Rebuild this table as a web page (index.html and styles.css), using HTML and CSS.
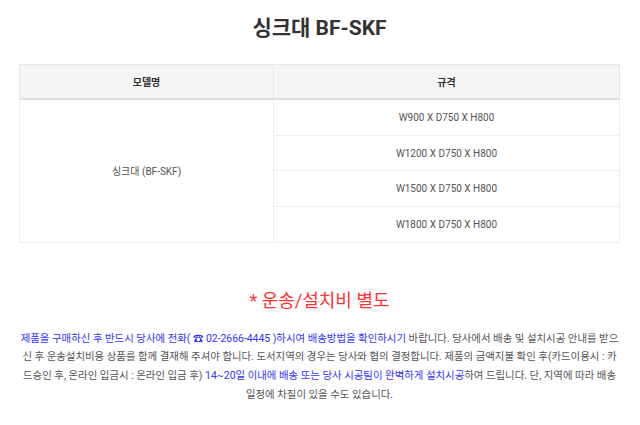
FILE: index.html
```html
<!DOCTYPE html>
<html lang="ko">
<head>
<meta charset="utf-8">
<link rel="stylesheet" href="styles.css">
</head>
<body>
<div class="page">
  <h1 class="title">싱크대 BF-SKF</h1>
  <table class="spec">
    <thead>
      <tr><th class="col-model">모델명</th><th>규격</th></tr>
    </thead>
    <tbody>
      <tr><td class="model" rowspan="4">싱크대 (BF-SKF)</td><td>W900 X D750 X H800</td></tr>
      <tr><td>W1200 X D750 X H800</td></tr>
      <tr><td>W1500 X D750 X H800</td></tr>
      <tr><td>W1800 X D750 X H800</td></tr>
    </tbody>
  </table>
  <p class="notice">* 운송/설치비 별도</p>
  <p class="desc"><span class="blue">제품을 구매하신 후 반드시 당사에 전화( ☎ 02-2666-4445 )하시여 배송방법을 확인하시기</span> 바랍니다. 당사에서 배송 및 설치시공 안내를 받으신 후 운송설치비용 상품를 함께 결재해 주셔야 합니다. 도서지역의 경우는 당사와 협의 결정합니다. 제품의 금액지불 확인 후(카드이용시 : 카드승인 후, 온라인 입금시 : 온라인 입금 후) <span class="blue">14~20일 이내에 배송 또는 당사 시공팀이 완벽하게 설치시공</span>하여 드립니다. 단, 지역에 따라 배송 일정에 차질이 있을 수도 있습니다.</p>
</div>
</body>
</html>
```

FILE: styles.css
```css
html, body {
  margin: 0;
  padding: 0;
  background: #fff;
}
body {
  font-family: Roboto, "Noto Sans CJK KR", sans-serif;
  color: #555;
}
.page {
  width: 601px;
  margin: 0 0 0 19px;
  padding: 14px 0 0 0;
}
.title {
  margin: 0 0 22px;
  text-align: center;
  font-size: 21px;
  line-height: 28px;
  font-weight: 700;
  color: #333;
}
.spec {
  width: 601px;
  border-collapse: collapse;
  border: 1px solid #e6e6e6;
  font-size: 10px;
}
.spec th {
  height: 33px;
  padding: 0;
  background: #f5f5f5;
  border: 1px solid #e6e6e6;
  border-bottom: 2px solid #dedede;
  font-weight: 700;
  color: #333;
}
.spec .col-model {
  width: 253px;
}
.spec td {
  height: 34.7px;
  padding: 0;
  text-align: center;
  border: 1px solid #eee;
  color: #555;
}
.notice {
  margin: 46px 0 0;
  text-align: center;
  font-size: 18px;
  line-height: 24px;
  color: #ff3333;
}
.desc {
  margin: 17px 0 0;
  text-align: center;
  font-size: 10.42px;
  line-height: 18.7px;
  color: #555;
}
.blue {
  color: #3333ff;
}
```
